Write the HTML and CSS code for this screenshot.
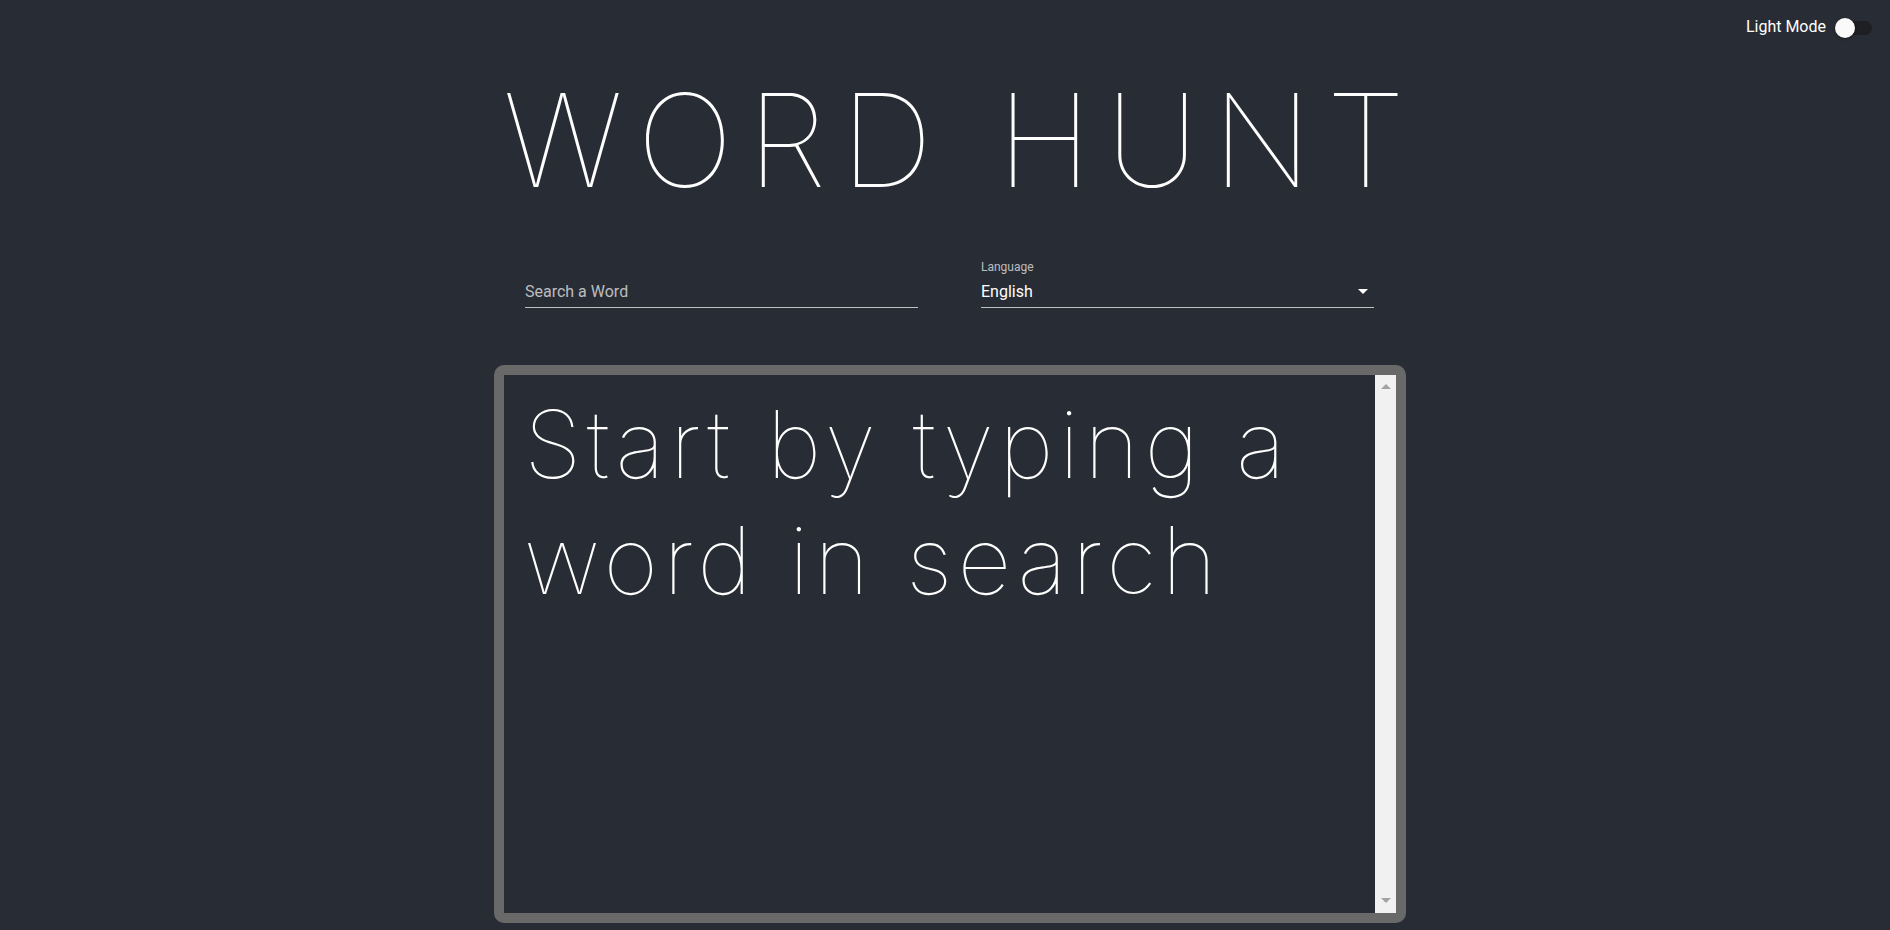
FILE: index.html
```html
<!DOCTYPE html>
<html lang="en">
<head>
<meta charset="utf-8">
<title>Word Hunt</title>
<link rel="stylesheet" href="styles.css">
</head>
<body>
<div class="app">
  <header class="topbar">
    <span class="mode-label">Light Mode</span>
    <span class="switch">
      <span class="switch-track"></span>
      <span class="switch-thumb"></span>
    </span>
  </header>
  <main class="column">
    <h1 class="title">WORD HUNT</h1>
    <div class="fields">
      <div class="field">
        <div class="field-label"></div>
        <div class="field-input placeholder">Search a Word</div>
      </div>
      <div class="field">
        <div class="field-label">Language</div>
        <div class="field-input select">
          <span>English</span>
          <svg class="drop" viewBox="0 0 24 24" width="24" height="24"><path d="M7 10l5 5 5-5z" fill="#ffffff"/></svg>
        </div>
      </div>
    </div>
    <section class="meanings">
      <div class="meanings-content">
        <p class="subtitle">Start by typing a word in search</p>
      </div>
      <div class="scrollbar">
        <span class="arrow up"></span>
        <span class="arrow down"></span>
      </div>
    </section>
  </main>
</div>
</body>
</html>
```
FILE: styles.css
```css
* { box-sizing: border-box; }
html, body { margin: 0; padding: 0; }
body {
  background: #282c34;
  color: #ffffff;
  font-family: Roboto, "Liberation Sans", sans-serif;
  height: 100vh;
  overflow: hidden;
}
.app { width: 100%; height: 100%; }

.topbar {
  height: 56px;
  display: flex;
  justify-content: flex-end;
  align-items: flex-start;
  padding-right: 18px;
}
.mode-label {
  margin-top: 17px;
  font-size: 16px;
  line-height: 20px;
  color: #ffffff;
  margin-right: 9px;
}
.switch {
  position: relative;
  width: 37px;
  height: 20px;
  margin-top: 18px;
}
.switch-track {
  position: absolute;
  left: 3px;
  top: 3px;
  width: 34px;
  height: 14px;
  border-radius: 7px;
  background: #1d1f23;
}
.switch-thumb {
  position: absolute;
  left: 0;
  top: 0;
  width: 20px;
  height: 20px;
  border-radius: 50%;
  background: #fafafa;
  box-shadow: 0 1px 3px rgba(0,0,0,0.4);
}

.column {
  width: 912px;
  margin-left: calc(50% - 451px);
}
.title {
  margin: 20px 0 0 0;
  font-family: Inter, Lato, sans-serif;
  font-weight: 100;
  font-size: 129px;
  line-height: 129px;
  letter-spacing: 14px;
  text-align: left;
  padding-left: 9px;
  white-space: nowrap;
}

.fields {
  margin-top: 55px;
  display: flex;
  gap: 63px;
  padding: 0 32px 0 31px;
}
.field { flex: 1; }
.field-label {
  height: 18px;
  padding-top: 1px;
  font-size: 12px;
  line-height: 12px;
  color: rgba(255,255,255,0.7);
}
.field-input {
  font-size: 16px;
  line-height: 19px;
  padding: 4px 0 6px 0;
  border-bottom: 1px solid rgba(255,255,255,0.7);
  color: #ffffff;
}
.field-input.placeholder { color: rgba(255,255,255,0.7); }
.field-input.select {
  display: flex;
  justify-content: space-between;
  align-items: center;
}
.drop { margin: -3px -1px -2px 0; }

.meanings {
  margin-top: 57px;
  height: 558px;
  border: 10px solid #696969;
  border-radius: 10px;
  display: flex;
}
.meanings-content {
  flex: 1;
  padding: 11px 20px;
}
.subtitle {
  margin: 0;
  font-family: Inter, Lato, sans-serif;
  font-weight: 100;
  font-size: 94px;
  line-height: 116px;
  letter-spacing: 5.2px;
}
.scrollbar {
  width: 21px;
  background: #f1f1f1;
  display: flex;
  flex-direction: column;
  justify-content: space-between;
  align-items: center;
  padding: 9px 0 10px 0;
}
.arrow {
  width: 0;
  height: 0;
  border-left: 5px solid transparent;
  border-right: 5px solid transparent;
}
.arrow.up { border-bottom: 5px solid #a3a3a3; }
.arrow.down { border-top: 5px solid #a3a3a3; }
```
